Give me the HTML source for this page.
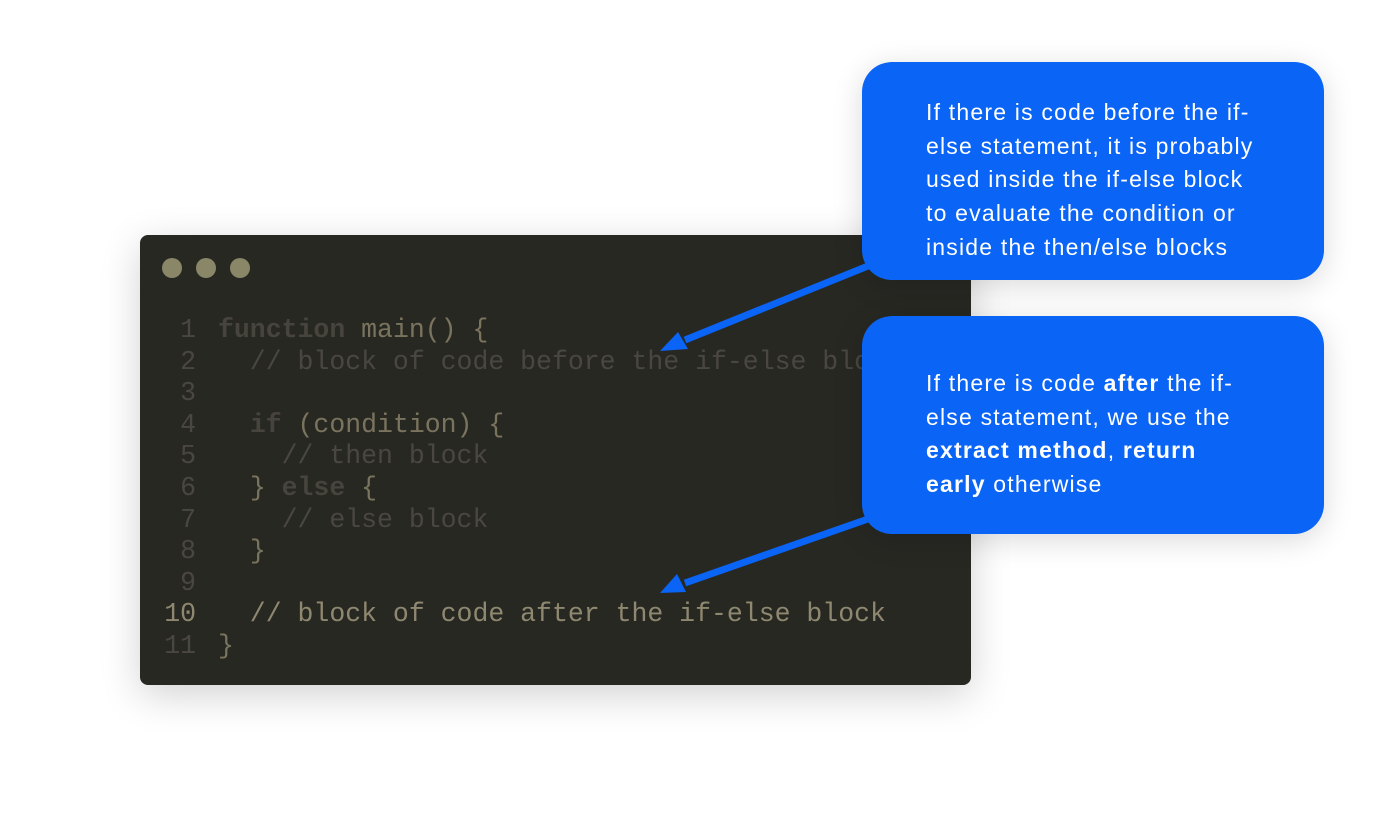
<!DOCTYPE html>
<html><head><style>
body{margin:0;width:1400px;height:816px;background:#fff;position:relative;overflow:hidden;font-family:"Liberation Sans",sans-serif}
.win{position:absolute;left:140px;top:235px;width:831px;height:450px;background:#282823;border-radius:8px;box-shadow:0 10px 40px rgba(0,0,0,.18)}
.dot{position:absolute;top:258px;width:20px;height:20px;border-radius:50%;background:#8a8668}
pre{position:absolute;margin:0;font-family:"Liberation Mono",monospace;font-size:26.5px;line-height:31.6px;color:#4a4740;white-space:pre;top:315px}
.num{left:140px;width:56px;text-align:right}
.code{left:218px}
.k{font-weight:bold;color:#46443c}.b{color:#7a745e}.h{color:#8f8870}
.bub{position:absolute;left:862px;width:462px;height:218px;background:#0a64f5;border-radius:30px;box-shadow:0 6px 30px rgba(0,0,0,.15);color:#fff;font-size:23px;line-height:33.7px;letter-spacing:1.2px;box-sizing:border-box;padding-left:64px;white-space:nowrap}
</style></head><body>
<div class="win"></div>
<div class="dot" style="left:162px"></div><div class="dot" style="left:196px"></div><div class="dot" style="left:230px"></div>
<pre class="num">1
2
3
4
5
6
7
8
9
<span class="h">10</span>
11</pre>
<pre class="code"><span class="k">function</span> <span class="b">main() {</span>
  // block of code before the if-else blo

  <span class="k">if</span> <span class="b">(condition) {</span>
    // then block
  <span class="b">}</span> <span class="k">else</span> <span class="b">{</span>
    // else block
  <span class="b">}</span>

<span class="h">  // block of code after the if-else block</span>
<span class="b">}</span></pre>
<div class="bub" style="top:62px;padding-top:34px">If there is code before the if-<br>else statement, it is probably<br>used inside the if-else block<br>to evaluate the condition or<br>inside the then/else blocks</div>
<div class="bub" style="top:316px;padding-top:51px">If there is code <b>after</b> the if-<br>else statement, we use the<br><b>extract method</b>, <b>return</b><br><b>early</b> otherwise</div>
<svg style="position:absolute;left:0;top:0" width="1400" height="816">
<g stroke="#0a64f5" stroke-width="7" fill="#0a64f5">
<line x1="868" y1="266" x2="685" y2="340"/>
<line x1="868" y1="519" x2="685" y2="583"/>
</g>
<polygon points="660,351 678,332 688,349" fill="#0a64f5"/>
<polygon points="660,593 677,574 686,592" fill="#0a64f5"/>
</svg>
</body></html>
